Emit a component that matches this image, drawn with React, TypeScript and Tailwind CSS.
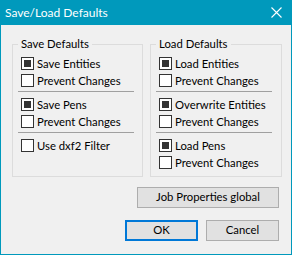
import React from 'react'

type Item = { label: string; checked: boolean }

// Each group holds sections split by a thin rule
const saveSections: Item[][] = [
  [
    { label: 'Save Entities', checked: true },
    { label: 'Prevent Changes', checked: false },
  ],
  [
    { label: 'Save Pens', checked: true },
    { label: 'Prevent Changes', checked: false },
  ],
  [{ label: 'Use dxf2 Filter', checked: false }],
]

const loadSections: Item[][] = [
  [
    { label: 'Load Entities', checked: true },
    { label: 'Prevent Changes', checked: false },
  ],
  [
    { label: 'Overwrite Entities', checked: true },
    { label: 'Prevent Changes', checked: false },
  ],
  [
    { label: 'Load Pens', checked: true },
    { label: 'Prevent Changes', checked: false },
  ],
]

function CheckRow({ item }: { item: Item }) {
  return (
    <div className="ml-[3px] flex h-[13px] items-center gap-[3px]">
      <span className="flex h-[13px] w-[13px] shrink-0 items-center justify-center border border-[#333333] bg-white">
        {item.checked && <span className="block h-[7px] w-[7px] bg-[#333333]" />}
      </span>
      <span className="whitespace-nowrap leading-[13px]">{item.label}</span>
    </div>
  )
}

function Group({ title, sections, width }: { title: string; sections: Item[][]; width: string }) {
  return (
    <fieldset className={`${width} h-[140px] border border-[#dcdcdc] pl-[5px] pt-[6px] pb-[7px]`}>
      <legend className="px-[3px] leading-[14px]">{title}</legend>
      {sections.map((section, i) => (
        <div key={i}>
          {i > 0 && <div className="mt-[4px] mb-[6px] h-px w-[116px] bg-[#a0a0a0]" />}
          <div className="flex flex-col gap-[4px]">
            {section.map((item, j) => (
              <CheckRow key={j} item={item} />
            ))}
          </div>
        </div>
      ))}
    </fieldset>
  )
}

export default function App() {
  return (
    <div
      className="h-[255px] w-[292px] border border-t-0 border-[#0099bc] bg-[#f0f0f0] text-[11.3px] text-black"
      style={{ fontFamily: 'Lato, "Liberation Sans", sans-serif' }}
    >
      {/* Title bar */}
      <div className="flex h-[25px] items-center justify-between bg-[#0099bc] pl-[4px] pr-[9px] text-[12px] text-white">
        <span>Save/Load Defaults</span>
        <svg width="11" height="11" viewBox="0 0 11 11" className="text-white">
          <path d="M0.5 0.5 L10.5 10.5 M10.5 0.5 L0.5 10.5" stroke="currentColor" strokeWidth="1.1" />
        </svg>
      </div>

      <div className="pl-[11px] pr-[9px] pt-[12px] pb-[13px]">
        <div className="grid grid-cols-[131px_132px] gap-[7px]">
          <Group title="Save Defaults" sections={saveSections} width="w-[131px]" />
          <Group title="Load Defaults" sections={loadSections} width="w-[132px]" />
        </div>

        <div className="mr-[3px] mt-[10px] flex justify-end">
          <button className="h-[21px] w-[142px] border border-[#adadad] bg-[#e1e1e1]">Job Properties global</button>
        </div>

        <div className="mr-[3px] mt-[12px] flex justify-end gap-[8px]">
          <button className="h-[21px] w-[73px] border-2 border-[#0078d7] bg-[#e1e1e1]">OK</button>
          <button className="h-[21px] w-[73px] border border-[#adadad] bg-[#e1e1e1]">Cancel</button>
        </div>
      </div>
    </div>
  )
}
